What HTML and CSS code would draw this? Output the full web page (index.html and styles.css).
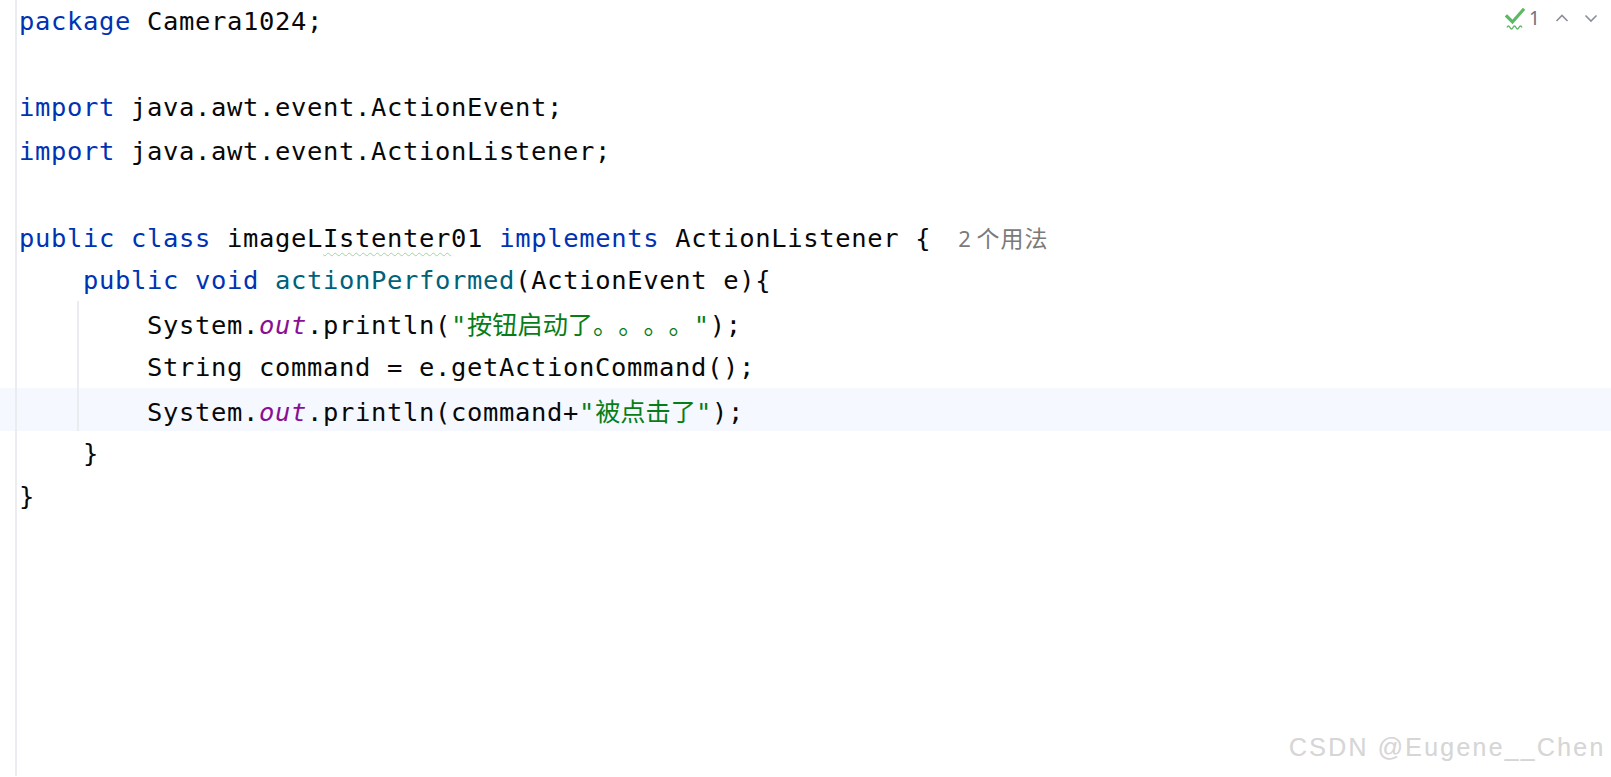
FILE: index.html
```html
<!DOCTYPE html>
<html lang="zh-CN">
<head>
<meta charset="utf-8">
<title>imageLIstenter01.java</title>
<link rel="stylesheet" href="styles.css">
</head>
<body>
<div class="editor">
  <div class="line"><span class="kw">package</span> Camera1024;</div>
  <div class="line"></div>
  <div class="line"><span class="kw">import</span> java.awt.event.ActionEvent;</div>
  <div class="line"><span class="kw">import</span> java.awt.event.ActionListener;</div>
  <div class="line"></div>
  <div class="line"><span class="kw">public</span> <span class="kw">class</span> imageL<span class="lint">Istenter</span>01 <span class="kw">implements</span> ActionListener {<span class="hint">2 <span class="hint-cjk">个用法</span></span></div>
  <div class="line">    <span class="kw">public</span> <span class="kw">void</span> <span class="fn">actionPerformed</span>(ActionEvent e){</div>
  <div class="line guide">        System.<span class="field">out</span>.println(<span class="str">"<span class="cjk">按钮启动了。。。。</span>"</span>);</div>
  <div class="line guide">        String command = e.getActionCommand();</div>
  <div class="line guide current">        System.<span class="field">out</span>.println(command+<span class="str">"<span class="cjk">被点击了</span>"</span>);</div>
  <div class="line">    }</div>
  <div class="line">}</div>
</div>

<div class="inspections">
  <svg class="check" width="22" height="24" viewBox="0 0 22 24" aria-hidden="true">
    <path d="M3 10.5 L8.5 16 L19 4" fill="none" stroke="#5fb865" stroke-width="3.2" stroke-linecap="square"/>
    <path d="M3 21.5 q1.5 -3 3 0 t3 0 t3 0 t3 0 t3 0" fill="none" stroke="#5fb865" stroke-width="1.4"/>
  </svg>
  <span class="count">1</span>
  <svg class="chev chev-up" width="14" height="10" viewBox="0 0 14 10" aria-hidden="true">
    <path d="M1.5 8 L7 2.5 L12.5 8" fill="none" stroke="#8c8f9a" stroke-width="1.6"/>
  </svg>
  <svg class="chev chev-down" width="14" height="10" viewBox="0 0 14 10" aria-hidden="true">
    <path d="M1.5 2.5 L7 8 L12.5 2.5" fill="none" stroke="#8c8f9a" stroke-width="1.6"/>
  </svg>
</div>

<div class="watermark">CSDN @Eugene__Chen</div>
</body>
</html>
```
FILE: styles.css
```css
html, body {
  margin: 0;
  padding: 0;
  background: #ffffff;
}

body {
  overflow: hidden;
}

.editor {
  min-height: 100vh;
  margin-top: -1px;
  background: linear-gradient(to right, #ffffff 15px, #ebecf0 15px, #ebecf0 17px, #ffffff 17px);
  font-family: "DejaVu Sans Mono", "Noto Sans CJK SC", monospace;
  font-size: 25.5px;
  letter-spacing: 0.65px;
  color: #080808;
  text-spacing-trim: space-all;
}

.line {
  height: 43.2px;
  box-sizing: border-box;
  padding-top: 4px;
  padding-left: 19px;
  line-height: 36.2px;
  white-space: pre;
}

.line.guide {
  background: linear-gradient(to right, transparent 77px, #ebecf0 77px, #ebecf0 79px, transparent 79px);
}

.line.guide.current {
  background:
    linear-gradient(to right, transparent 15px, #ebecf0 15px, #ebecf0 17px, transparent 17px),
    linear-gradient(to right, transparent 77px, #ebecf0 77px, #ebecf0 79px, transparent 79px),
    #f5f8fe;
}

.kw { color: #0033b3; }
.fn { color: #00627a; }
.field { color: #871094; font-style: italic; }
.str { color: #067d17; }

.cjk {
  font-family: "Noto Sans CJK SC", sans-serif;
  font-size: 25.2px;
  letter-spacing: 0;
  text-spacing-trim: space-all;
}

.lint {
  text-decoration: underline wavy #a6d2a6;
  text-decoration-thickness: 1px;
  text-underline-offset: 5px;
}

.hint {
  margin-left: 27px;
  font-family: "Noto Sans", "Noto Sans CJK SC", sans-serif;
  font-size: 22px;
  letter-spacing: 0;
  color: #7a7a7a;
}

.hint-cjk {
  font-family: "Noto Sans CJK SC", sans-serif;
  font-size: 23px;
  letter-spacing: 1px;
}

.inspections {
  position: absolute;
  top: 6px;
  left: 1504px;
  display: flex;
  align-items: center;
  height: 24px;
}

.check { display: block; }

.count {
  margin-left: 3px;
  font-family: "Noto Sans", sans-serif;
  font-size: 19px;
  line-height: 24px;
  color: #6c707e;
}

.chev { display: block; }
.chev-up { margin-left: 15px; }
.chev-down { margin-left: 15px; }

.watermark {
  position: absolute;
  top: 735px;
  left: 1289px;
  font-family: "Liberation Sans", Arial, sans-serif;
  font-size: 25px;
  line-height: 24px;
  letter-spacing: 2.2px;
  color: #d6d6d6;
  text-shadow: 1px 1px 0 rgba(255, 255, 255, 0.9), -0.5px -0.5px 0.5px rgba(0, 0, 0, 0.08);
  white-space: nowrap;
}
```
